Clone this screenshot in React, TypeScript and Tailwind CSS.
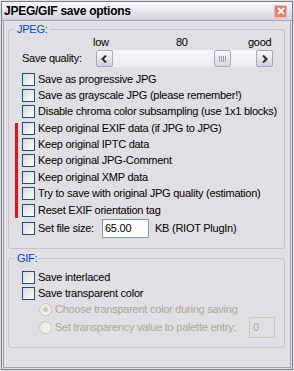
import React from "react";

function Checkbox() {
  return (
    <span className="block w-[13px] h-[13px] shrink-0 border border-[#1c5180] bg-gradient-to-br from-[#d8d8d4] to-white" />
  );
}

function CheckRow({ label, tall }: { label: string; tall?: boolean }) {
  return (
    <div className={"flex items-center gap-[3px] " + (tall ? "h-[17px]" : "h-[16px]")}>
      <Checkbox />
      <span className="whitespace-nowrap">{label}</span>
    </div>
  );
}

function Radio({ checked }: { checked?: boolean }) {
  return (
    <span className="flex items-center justify-center w-[13px] h-[13px] shrink-0 rounded-full border border-[#cac8bb] bg-gradient-to-br from-[#e6e6e2] to-[#f6f6f4]">
      {checked && <span className="block w-[5px] h-[5px] rounded-full bg-[#cac8bb]" />}
    </span>
  );
}

function ScrollButton({ dir }: { dir: "left" | "right" }) {
  return (
    <div className="flex items-center justify-center w-[17px] h-[17px] shrink-0 rounded-[2px] border border-[#a9a9bd] bg-gradient-to-b from-[#fafafc] to-[#cfcfdb]">
      <svg width="7" height="8" viewBox="0 0 7 8">
        <path
          d={dir === "left" ? "M5 0.5 L1.5 4 L5 7.5" : "M2 0.5 L5.5 4 L2 7.5"}
          fill="none"
          stroke="#2a2a2a"
          strokeWidth="2"
        />
      </svg>
    </div>
  );
}

function QualityBar() {
  return (
    <div className="flex w-[177px] h-[17px]">
      <ScrollButton dir="left" />
      <div className="flex-1 flex items-center pl-[101px] bg-gradient-to-b from-[#f6f6f9] to-[#ececf1]">
        <div className="flex items-center justify-center gap-[1px] w-[17px] h-[17px] rounded-[2px] border border-[#a9a9bd] bg-gradient-to-b from-[#fafafc] to-[#d6d6e0]">
          <span className="block w-[1px] h-[6px] bg-[#9a9aac]" />
          <span className="block w-[1px] h-[6px] bg-[#9a9aac]" />
          <span className="block w-[1px] h-[6px] bg-[#9a9aac]" />
          <span className="block w-[1px] h-[6px] bg-[#9a9aac]" />
        </div>
      </div>
      <ScrollButton dir="right" />
    </div>
  );
}

export default function App() {
  return (
    <div className="w-[294px] h-[371px] p-[1px] bg-[#e0dfe3] font-['Liberation_Sans',Arial,sans-serif] text-[11px] leading-[13px] tracking-[-0.25px] text-black">
      <div className="h-full flex flex-col border border-[#7c7c8e]">
        <div className="h-[19px] shrink-0 flex items-center pl-[2px] border-b border-[#a9a8b8] bg-gradient-to-b from-[#fbfbfc] to-[#d3d2dc]">
          <span className="font-bold text-[12px] tracking-[-0.25px]">JPEG/GIF save options</span>
          <div className="ml-auto mr-[5px] flex items-center justify-center w-[13px] h-[13px] rounded-[2px] border border-[#f2b4a6] bg-[#e0816b]">
            <svg width="8" height="8" viewBox="0 0 8 8">
              <path d="M1 1 L7 7 M7 1 L1 7" stroke="white" strokeWidth="1.8" />
            </svg>
          </div>
        </div>

        <div className="flex-1 flex flex-col px-[1px] pb-[1px]">
          <div className="flex-1 flex flex-col border-x border-b border-[#a3a2b4]">
            <fieldset className="ml-[4px] mt-[2px] w-[277px] min-w-0 border border-[#c6c2cc] rounded-[3px] pb-[10px]">
              <legend className="ml-[6px] px-[2px] text-[#0046d5]">JPEG:</legend>
              <div className="flex h-[13px] pl-[84px]">
                <span className="w-[83px]">low</span>
                <span className="w-[72px]">80</span>
                <span>good</span>
              </div>
              <div className="flex items-center h-[17px] mt-[1px] pl-[13px]">
                <span className="w-[74px]">Save quality:</span>
                <QualityBar />
              </div>
              <div className="flex flex-col mt-[4px] pl-[13px]">
                <CheckRow label="Save as progressive JPG" />
                <CheckRow label="Save as grayscale JPG (please remember!)" />
                <CheckRow label="Disable chroma color subsampling (use 1x1 blocks)" tall />
              </div>
              <div className="flex pl-[6px]">
                <div className="w-[3px] mt-[3px] bg-[#f01010]" />
                <div className="flex flex-col pl-[4px]">
                  <CheckRow label="Keep original EXIF data (if JPG to JPG)" />
                  <CheckRow label="Keep original IPTC data" />
                  <CheckRow label="Keep original JPG-Comment" tall />
                  <CheckRow label="Keep original XMP data" />
                  <CheckRow label="Try to save with original JPG quality (estimation)" tall />
                  <CheckRow label="Reset EXIF orientation tag" />
                </div>
              </div>
              <div className="flex items-center h-[19px] mt-[1px] pl-[13px]">
                <Checkbox />
                <span className="w-[67px] pl-[3px]">Set file size:</span>
                <div className="flex items-center w-[47px] h-[19px] pl-[2px] border border-[#7f9db9] bg-white">
                  65.00
                </div>
                <span className="ml-[6px]">KB (RIOT PlugIn)</span>
              </div>
            </fieldset>

            <fieldset className="ml-[4px] mt-[3px] w-[277px] min-w-0 border border-[#c6c2cc] rounded-[3px] pb-[9px]">
              <legend className="ml-[6px] px-[2px] text-[#0046d5]">GIF:</legend>
              <div className="flex flex-col mt-[4px] pl-[13px]">
                <CheckRow label="Save interlaced" />
                <CheckRow label="Save transparent color" />
              </div>
              <div className="flex flex-col pl-[30px] pr-[9px] text-[#aca899]">
                <div className="flex items-center h-[16px] gap-[3px]">
                  <Radio checked />
                  <span>Choose transparent color during saving</span>
                </div>
                <div className="flex items-center h-[21px] gap-[3px]">
                  <Radio />
                  <span>Set transparency value to palette entry:</span>
                  <div className="ml-auto flex items-center w-[26px] h-[21px] pl-[3px] border border-[#c9c7ba]">
                    0
                  </div>
                </div>
              </div>
            </fieldset>
          </div>
        </div>
      </div>
    </div>
  );
}
